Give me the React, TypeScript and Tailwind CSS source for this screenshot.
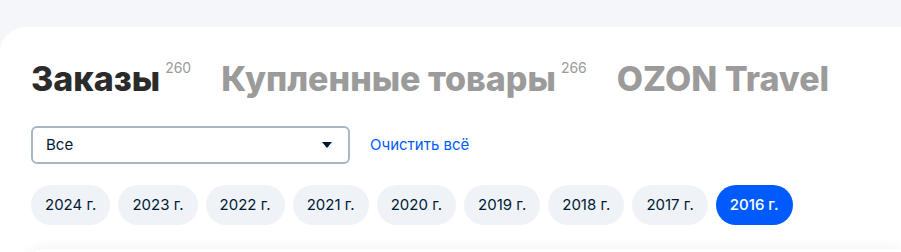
import React from 'react';

const years = ['2024', '2023', '2022', '2021', '2020', '2019', '2018', '2017', '2016'];

function Tab({ label, count, active }: { label: string; count?: number; active?: boolean }) {
  return (
    <div className="flex items-start">
      <span
        className={`text-[34px] font-extrabold leading-[40px] ${active ? 'text-[#2b2b2b]' : 'text-[#9b9b9b]'}`}
      >
        {label}
      </span>
      {count !== undefined && (
        <span className="ml-[5px] mt-[1px] text-[14px] leading-[16px] text-[#9b9b9b]">{count}</span>
      )}
    </div>
  );
}

export default function App() {
  return (
    <div className="h-[252px] overflow-hidden bg-[#f5f6f9] pt-[27px]" style={{ fontFamily: 'Inter, "Noto Sans", sans-serif' }}>
      <div className="h-full rounded-tl-[26px] bg-white pl-[31px] pt-[32px]">
        <div className="flex items-start gap-[30px]">
          <Tab label="Заказы" count={260} active />
          <Tab label="Купленные товары" count={266} />
          <Tab label="OZON Travel" />
        </div>

        <div className="mt-[27px] flex items-center gap-[20px]">
          <div className="flex h-[38px] w-[319px] items-center justify-between rounded-[6px] border-2 border-[#abb6c3] pl-[13px] pr-[16px]">
            <span className="text-[15px] text-[#001a34]">Все</span>
            <svg width="10" height="6" viewBox="0 0 10 6">
              <path d="M0 0h10L5 6z" fill="#001a34" />
            </svg>
          </div>
          <span className="text-[15px] text-[#005bff]">Очистить всё</span>
        </div>

        <div className="mt-[21px] flex gap-[8px]">
          {years.map((y) => (
            <div
              key={y}
              className={`flex h-[40px] items-center rounded-full px-[14px] text-[15px] ${
                y === '2016' ? 'bg-[#005bff] font-medium text-white' : 'bg-[#eff3f8] text-[#001a34]'
              }`}
            >
              {y} г.
            </div>
          ))}
        </div>

        <div className="ml-[-6px] mt-[24px] h-[20px] rounded-tl-[20px] bg-white shadow-[0_-2px_12px_rgba(0,0,0,0.05)]" />
      </div>
    </div>
  );
}
